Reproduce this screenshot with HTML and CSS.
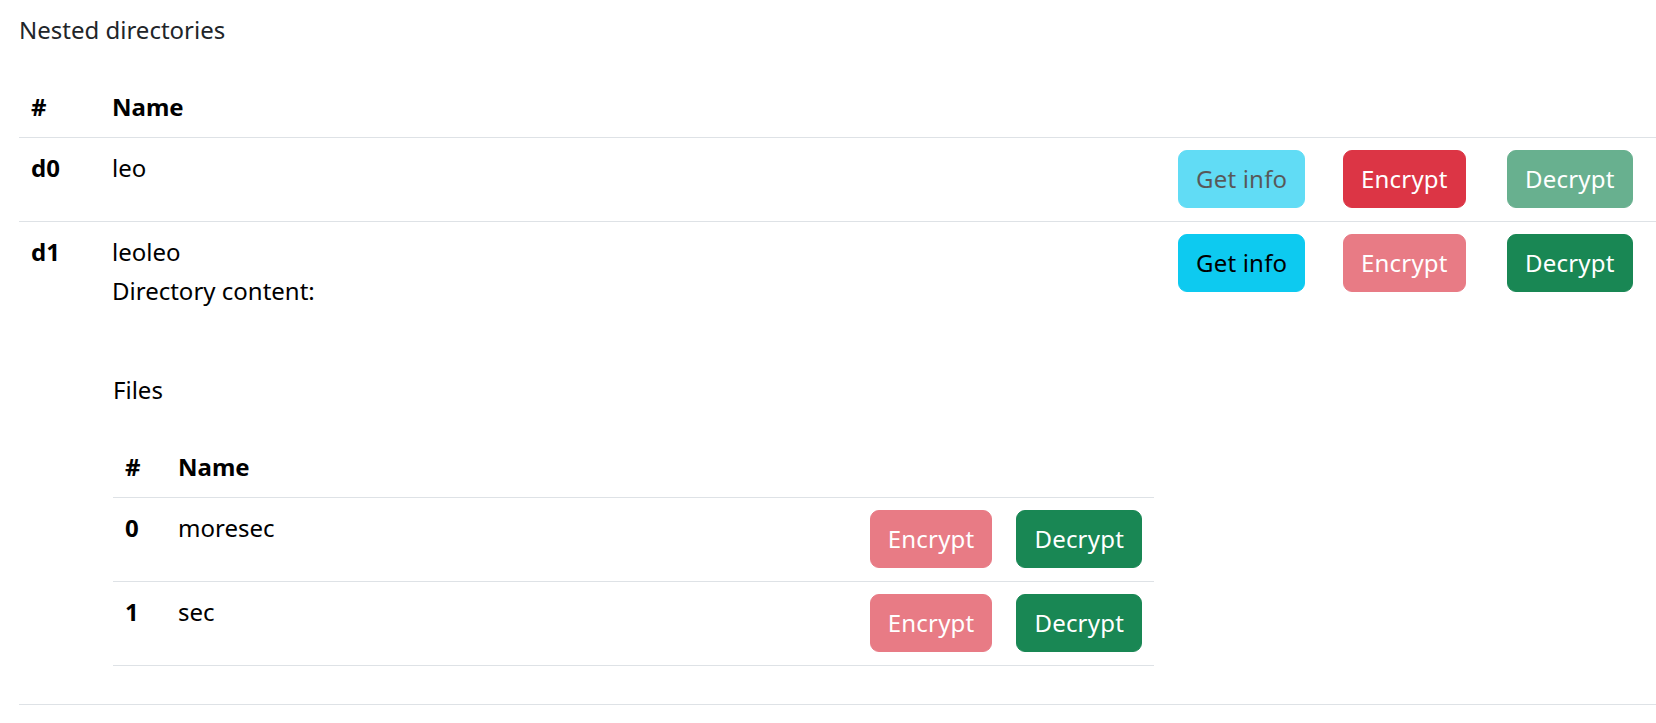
FILE: index.html
```html
<!DOCTYPE html>
<html lang="en">
<head>
<meta charset="utf-8">
<title>Nested directories</title>
<link rel="stylesheet" href="styles.css">
</head>
<body>
<div class="page">
  <p class="section-title">Nested directories</p>
  <table class="dir-table">
    <colgroup>
      <col class="c-idx"><col class="c-name"><col class="c-act1"><col class="c-act2"><col class="c-act3">
    </colgroup>
    <thead>
      <tr><th>#</th><th>Name</th><th></th><th></th><th></th></tr>
    </thead>
    <tbody>
      <tr>
        <th>d0</th>
        <td>leo</td>
        <td><button class="btn btn-info" disabled>Get info</button></td>
        <td><button class="btn btn-danger">Encrypt</button></td>
        <td><button class="btn btn-success" disabled>Decrypt</button></td>
      </tr>
      <tr>
        <th>d1</th>
        <td>
          <div>leoleo</div>
          <div class="dir-label">Directory content:</div>
          <p class="section-title files-title">Files</p>
          <table class="file-table">
            <thead>
              <tr><th class="idx">#</th><th>Name</th><th class="act"></th><th class="act"></th></tr>
            </thead>
            <tbody>
              <tr>
                <th class="idx">0</th>
                <td>moresec</td>
                <td class="act"><button class="btn btn-danger" disabled>Encrypt</button></td>
                <td class="act"><button class="btn btn-success">Decrypt</button></td>
              </tr>
              <tr>
                <th class="idx">1</th>
                <td>sec</td>
                <td class="act"><button class="btn btn-danger" disabled>Encrypt</button></td>
                <td class="act"><button class="btn btn-success">Decrypt</button></td>
              </tr>
            </tbody>
          </table>
        </td>
        <td><button class="btn btn-info">Get info</button></td>
        <td><button class="btn btn-danger" disabled>Encrypt</button></td>
        <td><button class="btn btn-success">Decrypt</button></td>
      </tr>
    </tbody>
  </table>
</div>
</body>
</html>
```

FILE: styles.css
```css
html, body {
  margin: 0;
  padding: 0;
  background: #fff;
}

body {
  font-family: "Noto Sans", "Open Sans", sans-serif;
  font-size: 24px;
  line-height: 36px;
  color: #212529;
  overflow: hidden;
}

.page {
  padding: 12px 0 0 19px;
}

.section-title {
  margin: 0 0 29px;
}

.files-title {
  margin-top: 63px;
  padding-left: 1px;
}

.dir-label {
  margin-top: 3px;
}

table {
  border-collapse: collapse;
}

th, td {
  padding: 12px 12px 13px;
  text-align: left;
  vertical-align: top;
  border-bottom: 1px solid #dee2e6;
  color: #000;
}

thead th {
  padding-bottom: 12px;
}

th {
  font-weight: 700;
}

.dir-table {
  width: 1637px;
  table-layout: fixed;
}

.c-idx { width: 81px; }
.c-name { width: 1066px; }
.c-act1 { width: 165px; }
.c-act2 { width: 164px; }

.file-table {
  width: calc(100% - 1px);
  margin: 0 0 25px 1px;
}

.file-table .idx {
  width: 29px;
}

.file-table .act {
  width: 1%;
  white-space: nowrap;
}

.btn {
  display: inline-block;
  vertical-align: top;
  font: inherit;
  line-height: 36px;
  padding: 10px 17px;
  border: 1px solid transparent;
  border-radius: 9px;
  letter-spacing: 0.2px;
  cursor: pointer;
}

.btn:disabled {
  opacity: 0.65;
  cursor: default;
}

.btn-info {
  background: #0dcaf0;
  border-color: #0dcaf0;
  color: #000;
}

.btn-danger {
  background: #dc3545;
  border-color: #dc3545;
  color: #fff;
}

.btn-success {
  background: #198754;
  border-color: #198754;
  color: #fff;
}
```
